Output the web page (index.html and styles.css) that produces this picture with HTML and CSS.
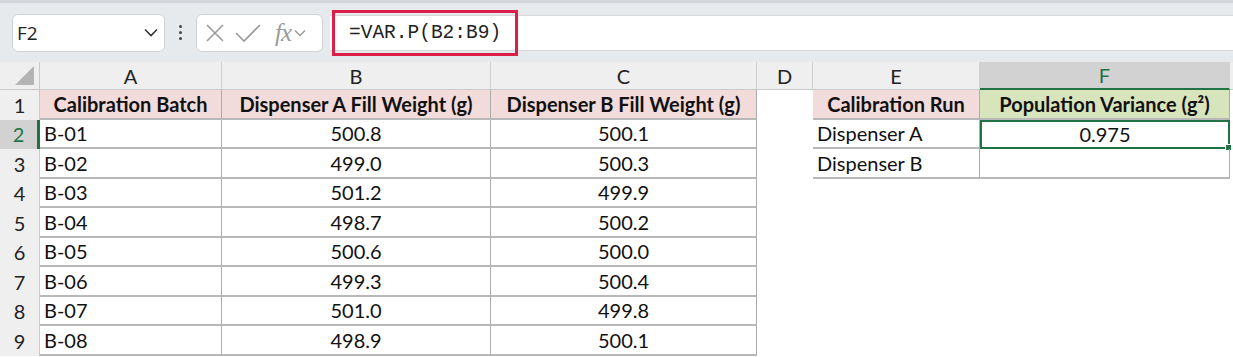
FILE: index.html
```html
<!DOCTYPE html>
<html lang="en">
  <head>
    <meta charset="UTF-8" />
    <title>VAR.P</title>
    <link rel="stylesheet" href="styles.css">
  </head>
  <body>
    <div class="toolbar">
      <div class="name-box">
        <span>F2</span>
        <svg class="chev" width="14" height="9" viewBox="0 0 14 9"><path d="M1 1.5 L7 7.5 L13 1.5" fill="none" stroke="#333" stroke-width="1.6"/></svg>
      </div>
      <div class="dots"><i></i><i></i><i></i></div>
      <div class="fn-box">
        <svg width="20" height="20" viewBox="0 0 20 20"><path d="M2 2 L18 18 M18 2 L2 18" stroke="#9a9a9a" stroke-width="1.6"/></svg>
        <svg width="26" height="22" viewBox="0 0 26 22"><path d="M1 11 L9 19 L25 3" fill="none" stroke="#9a9a9a" stroke-width="1.6"/></svg>
        <span class="fx">fx</span>
        <svg width="12" height="8" viewBox="0 0 12 8"><path d="M1 1.5 L6 6.5 L11 1.5" fill="none" stroke="#9a9a9a" stroke-width="1.4"/></svg>
      </div>
      <div class="formula">
        <span class="formula-text">=VAR.P(B2:B9)</span>
      </div>
    </div>

    <div class="sheet">
      <div class="corner"><div class="tri"></div></div>
      <div class="col-h">A</div>
      <div class="col-h">B</div>
      <div class="col-h">C</div>
      <div class="col-h">D</div>
      <div class="col-h">E</div>
      <div class="col-h sel">F</div>
      <div class="col-h end"></div>

      <div class="row-h">1</div>
      <div class="c hd">Calibration Batch</div>
      <div class="c hd">Dispenser A Fill Weight (g)</div>
      <div class="c hd">Dispenser B Fill Weight (g)</div>
      <div class="e"></div>
      <div class="c hd">Calibration Run</div>
      <div class="c hd green">Population Variance (g²)</div>
      <div class="e"></div>

      <div class="row-h sel">2</div>
      <div class="c">B-01</div>
      <div class="c num">500.8</div>
      <div class="c num">500.1</div>
      <div class="e"></div>
      <div class="c">Dispenser A</div>
      <div class="c num active">0.975<span class="handle"></span></div>
      <div class="e"></div>

      <div class="row-h">3</div>
      <div class="c">B-02</div>
      <div class="c num">499.0</div>
      <div class="c num">500.3</div>
      <div class="e"></div>
      <div class="c">Dispenser B</div>
      <div class="c num"></div>
      <div class="e"></div>

      <div class="row-h">4</div>
      <div class="c">B-03</div>
      <div class="c num">501.2</div>
      <div class="c num">499.9</div>
      <div class="e"></div><div class="e"></div><div class="e"></div><div class="e"></div>

      <div class="row-h">5</div>
      <div class="c">B-04</div>
      <div class="c num">498.7</div>
      <div class="c num">500.2</div>
      <div class="e"></div><div class="e"></div><div class="e"></div><div class="e"></div>

      <div class="row-h">6</div>
      <div class="c">B-05</div>
      <div class="c num">500.6</div>
      <div class="c num">500.0</div>
      <div class="e"></div><div class="e"></div><div class="e"></div><div class="e"></div>

      <div class="row-h">7</div>
      <div class="c">B-06</div>
      <div class="c num">499.3</div>
      <div class="c num">500.4</div>
      <div class="e"></div><div class="e"></div><div class="e"></div><div class="e"></div>

      <div class="row-h">8</div>
      <div class="c">B-07</div>
      <div class="c num">501.0</div>
      <div class="c num">499.8</div>
      <div class="e"></div><div class="e"></div><div class="e"></div><div class="e"></div>

      <div class="row-h">9</div>
      <div class="c">B-08</div>
      <div class="c num">498.9</div>
      <div class="c num">500.1</div>
      <div class="e"></div><div class="e"></div><div class="e"></div><div class="e"></div>
    </div>
  </body>
</html>
```

FILE: styles.css
```css
* {
  margin: 0;
  padding: 0;
  box-sizing: border-box;
}
body {
  background: #fff;
  font-family: "Lato", "Liberation Sans", sans-serif;
  color: #111;
  overflow: hidden;
}

.toolbar {
  height: 62px;
  background: #e7eaed;
  border-top: 3px solid #d3d6da;
  display: flex;
  align-items: center;
  padding-left: 12px;
}

.name-box {
  width: 153px;
  height: 38px;
  background: #fff;
  border: 1px solid #d0d3d6;
  border-radius: 6px;
  display: flex;
  align-items: center;
  justify-content: space-between;
  padding: 0 6px 0 4px;
  font-family: "Open Sans", sans-serif;
  font-size: 19px;
  color: #222;
}

.dots {
  width: 31px;
  display: flex;
  flex-direction: column;
  align-items: center;
  gap: 3px;
}
.dots i {
  width: 3px;
  height: 3px;
  background: #444;
  border-radius: 50%;
}

.fn-box {
  width: 127px;
  height: 38px;
  background: #fff;
  border: 1px solid #d0d3d6;
  border-radius: 6px;
  display: flex;
  align-items: center;
  gap: 10px;
  padding-left: 8px;
}
.fx {
  font-family: "Liberation Serif", serif;
  font-style: italic;
  font-size: 25px;
  color: #9a9a9a;
  margin-left: 4px;
  margin-right: -7px;
  letter-spacing: -1px;
}

.formula {
  flex: 1;
  margin-left: 7px;
  height: 36px;
  background: #fff;
  border-top: 1px solid #d6d9dc;
  border-bottom: 1px solid #d6d9dc;
  display: flex;
  align-items: center;
}
.formula-text {
  font-family: "Liberation Mono", monospace;
  font-size: 19.5px;
  color: #222;
  border: 3px solid #dc1f48;
  height: 46px;
  line-height: 40px;
  padding: 0 14px;
  margin-left: 2px;
}

.sheet {
  display: grid;
  grid-template-columns: 40px 182px 269px 266px 56px 167px 250px 3px;
  grid-template-rows: 28px repeat(9, 29.5px);
  font-size: 20px;
}

.corner {
  background: #efefef;
  border-right: 1px solid #c9c9c9;
  border-bottom: 1px solid #c9c9c9;
  position: relative;
}
.tri {
  position: absolute;
  right: 5px;
  bottom: 4px;
  width: 0;
  height: 0;
  border-left: 19px solid transparent;
  border-bottom: 19px solid #b4b4b4;
}

.col-h {
  background: #efefef;
  border-right: 1px solid #d2d2d2;
  border-bottom: 1px solid #c9c9c9;
  display: flex;
  align-items: center;
  justify-content: center;
  color: #222;
}
.col-h.sel {
  background: #d2d2d2;
  color: #217346;
  border-bottom: 2px solid #217346;
}
.col-h.end {
  border-right: none;
}

.row-h {
  background: #efefef;
  border-right: 1px solid #c9c9c9;
  display: flex;
  align-items: center;
  justify-content: center;
  color: #222;
}
.row-h.sel {
  background: #d2d2d2;
  color: #217346;
  border-right: 3px solid #217346;
}

.c {
  border-right: 1px solid #ababab;
  border-bottom: 2px solid #b8b8b8;
  display: flex;
  align-items: center;
  padding-left: 4px;
  white-space: nowrap;
  position: relative;
}
.c.num {
  justify-content: center;
  padding-left: 0;
}
.c.hd {
  background: #f2dcdb;
  font-weight: bold;
  justify-content: center;
  padding-left: 0;
}
.c.hd.green {
  background: #d8e4bc;
}
.c.active {
  border: 2px solid #217346;
}
.handle {
  position: absolute;
  right: -4px;
  bottom: -4px;
  width: 7px;
  height: 7px;
  background: #217346;
  border: 1px solid #fff;
}
.e {
  background: #fff;
}
```
